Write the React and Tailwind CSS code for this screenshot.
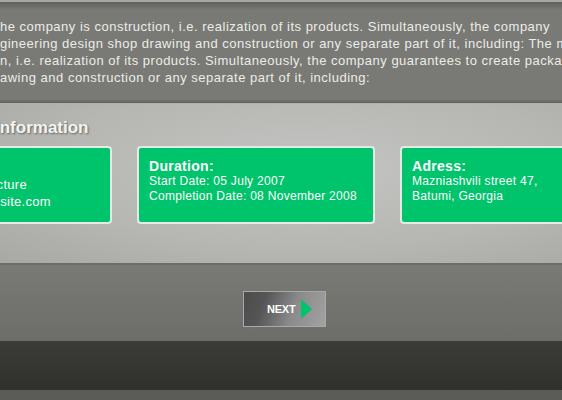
export default function App() {
  const font = { fontFamily: '"Liberation Sans", Arial, sans-serif' };
  return (
    <div className="w-[562px] h-[400px] overflow-hidden bg-[#797a75] flex flex-col" style={font}>
      {/* top strip */}
      <div className="h-[2px] bg-[#a6a7a3]" />
      <div className="h-[8px] bg-gradient-to-b from-[#5f605c] to-[#797a75]" />

      {/* intro paragraph */}
      <div className="pt-[8px] h-[90px] text-[13px] leading-[17px] tracking-[0.5px] text-[#ecece8] whitespace-nowrap">
        <div>he company is construction, i.e. realization of its products. Simultaneously, the company</div>
        <div>gineering design shop drawing and construction or any separate part of it, including: The main</div>
        <div>n, i.e. realization of its products. Simultaneously, the company guarantees to create package</div>
        <div>awing and construction or any separate part of it, including:</div>
      </div>

      {/* shadow above panel */}
      <div className="h-[3px] bg-gradient-to-b from-[#71726e] to-[#62635f]" />

      {/* information panel */}
      <div className="h-[162px] border-t border-[#b0b1ad] border-b-2 border-b-[#6c6d69] bg-[radial-gradient(ellipse_at_55%_40%,#c4c5c2_0%,#b6b7b3_60%,#a8a9a5_100%)]">
        <h2 className="-ml-[5px] pt-[13px] text-[17px] font-bold text-[#f4f4f2] leading-[22px] [text-shadow:1px_1px_2px_rgba(0,0,0,0.45)]">
          Information
        </h2>
        <div className="mt-[7px] flex gap-[25px] -ml-[126px]">
          {/* card 1 (cut off) */}
          <div className="w-[238px] h-[78px] shrink-0 rounded-[4px] border-2 border-[#e4ebe6] bg-[#00c46b] text-white text-[13px] leading-[17px] tracking-[0.3px] pt-[28px]">
            <div className="w-[151px] flex justify-end whitespace-nowrap">Web Architecture</div>
            <div className="w-[175px] flex justify-end whitespace-nowrap">www.yourwebsite.com</div>
          </div>
          {/* card 2 */}
          <div className="w-[238px] h-[78px] shrink-0 rounded-[4px] border-2 border-[#e4ebe6] bg-[#00c46b] text-white pl-[10px] pt-[10px] whitespace-nowrap tracking-[0.3px]">
            <div className="text-[14px] font-bold leading-[16px]">Duration:</div>
            <div className="text-[12px] leading-[15px]">Start Date: 05 July 2007</div>
            <div className="text-[12px] leading-[15px]">Completion Date: 08 November 2008</div>
          </div>
          {/* card 3 */}
          <div className="w-[238px] h-[78px] shrink-0 rounded-[4px] border-2 border-[#e4ebe6] bg-[#00c46b] text-white pl-[10px] pt-[10px] whitespace-nowrap tracking-[0.3px]">
            <div className="text-[14px] font-bold leading-[16px]">Adress:</div>
            <div className="text-[12px] leading-[15px]">Mazniashvili street 47,</div>
            <div className="text-[12px] leading-[15px]">Batumi, Georgia</div>
          </div>
        </div>
      </div>

      {/* next button area */}
      <div className="h-[76px] bg-gradient-to-b from-[#797a75] to-[#6d6e69] flex justify-center pt-[26px] pl-[6px]">
        <button className="w-[83px] h-[36px] border border-[#a9a9a7] bg-[linear-gradient(110deg,#4c4c4c_0%,#555555_25%,#8a8a8a_60%,#a2a2a2_100%)] flex items-center justify-end pr-[13px] gap-[5px]">
          <span className="text-[11px] font-bold text-white tracking-[-0.2px]">NEXT</span>
          <svg width="11" height="20" viewBox="0 0 11 20">
            <polygon points="0,0 11,10 0,20" fill="#00c46b" />
          </svg>
        </button>
      </div>

      {/* footer */}
      <div className="h-[49px] bg-gradient-to-b from-[#3b3c37] to-[#30312d]" />
      <div className="flex-1 bg-[#5b5c57]" />
    </div>
  );
}
